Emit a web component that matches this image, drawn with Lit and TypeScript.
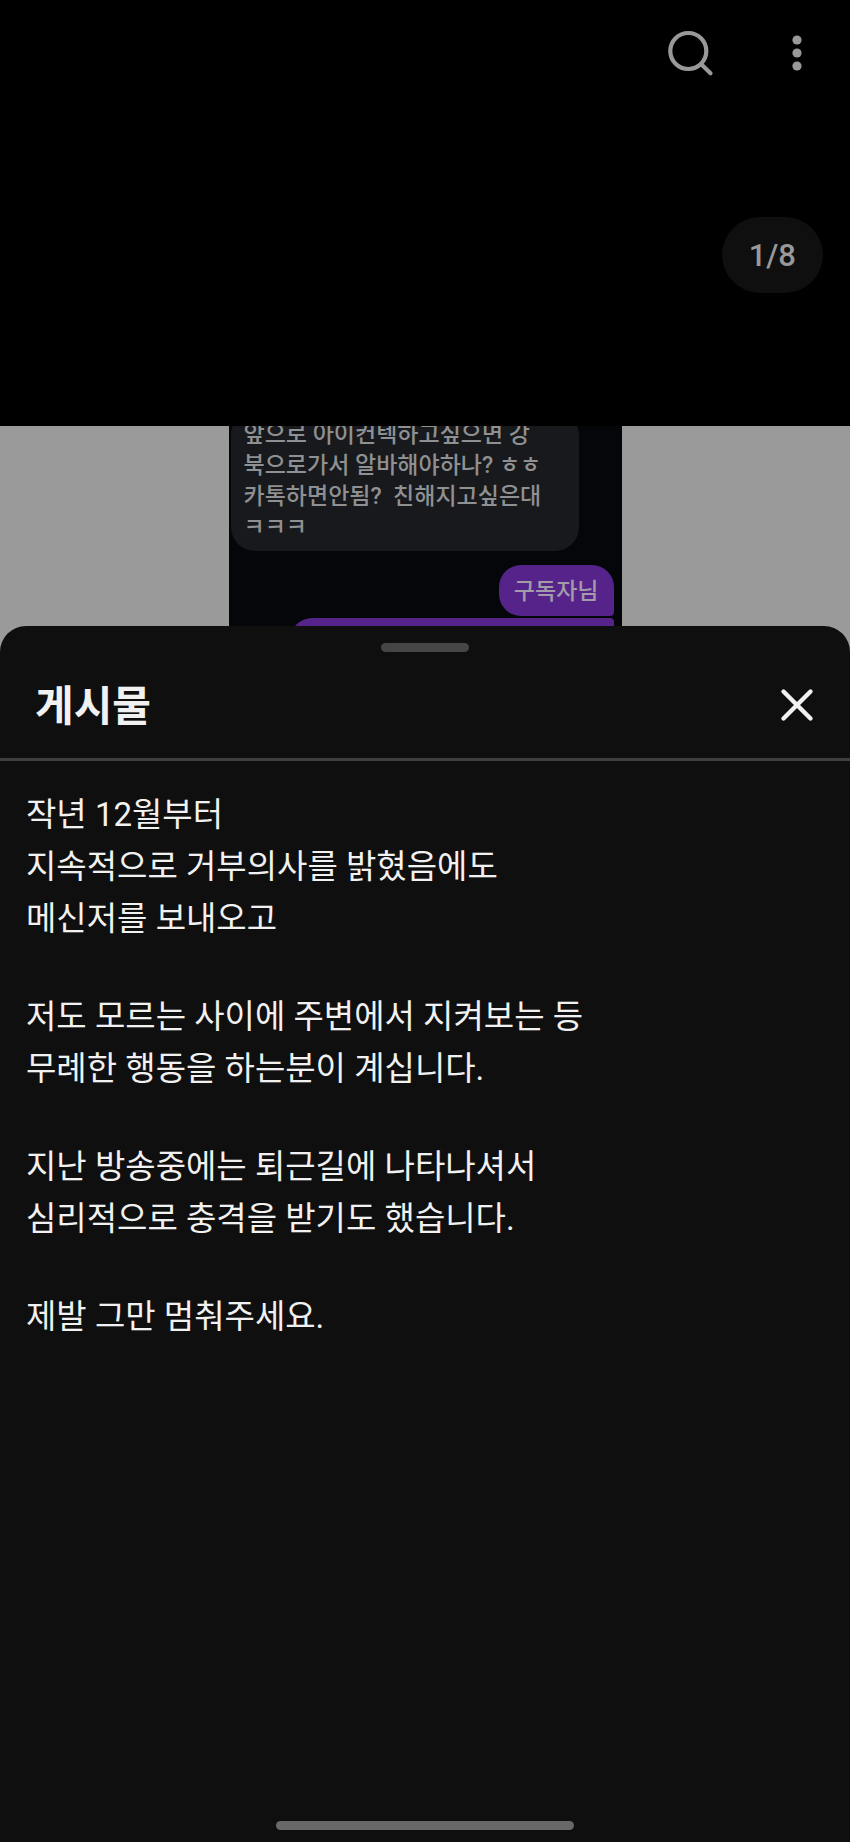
import { LitElement, html, css } from "lit";
import { customElement, state } from "lit/decorators.js";

const PARAGRAPHS = [
  "작년 12월부터\n지속적으로 거부의사를 밝혔음에도\n메신저를 보내오고",
  "저도 모르는 사이에 주변에서 지켜보는 등\n무례한 행동을 하는분이 계십니다.",
  "지난 방송중에는 퇴근길에 나타나셔서\n심리적으로 충격을 받기도 했습니다.",
  "제발 그만 멈춰주세요.",
];

const RECEIVED = "앞으로 아이컨텍하고싶으면 강\n북으로가서 알바해야하나? ㅎㅎ\n카톡하면안됨?  친해지고싶은대\nㅋㅋㅋ";

/** Cropped chat screenshot attached to the post. */
@customElement("chat-preview")
export class ChatPreview extends LitElement {
  static styles = css`
    :host {
      display: flex;
      justify-content: center;
      height: 226px;
      background: #9a9a9a;
    }
    .chat {
      box-sizing: border-box;
      display: flex;
      flex-direction: column;
      justify-content: flex-end;
      align-items: flex-end;
      width: 393px;
      padding: 0 8px 0 2px;
      overflow: hidden;
      background: #05060a;
      font-size: 23px;
      font-weight: 500;
      line-height: 31px;
    }
    .bubble {
      box-sizing: border-box;
      flex: none;
      margin: 0;
      white-space: pre;
    }
    .received {
      align-self: flex-start;
      width: 348px;
      margin-bottom: 14px;
      padding: 8px 13px;
      border-radius: 24px;
      background: #17191d;
      color: #8f9091;
    }
    .sent {
      margin-bottom: 2px;
      padding: 11px 15px 9px;
      border-radius: 22px 22px 4px 22px;
      background: #552389;
      color: #a39aaa;
    }
    .next {
      width: 324px;
      height: 34px;
      border-radius: 22px 4px 0 0;
      background: #552389;
    }
  `;

  render() {
    return html`
      <div class="chat">
        <p class="bubble received">${RECEIVED}</p>
        <p class="bubble sent">구독자님</p>
        <div class="bubble next"></div>
      </div>
    `;
  }
}

@customElement("post-sheet")
export class PostSheet extends LitElement {
  static styles = css`
    :host {
      box-sizing: border-box;
      display: flex;
      flex-direction: column;
      flex: 1;
      position: relative;
      margin-top: -26px;
      padding-top: 17px;
      border-radius: 26px 26px 0 0;
      background: #0f0f0f;
      color: #f1f1f1;
    }
    .grip {
      align-self: center;
      width: 88px;
      height: 9px;
      border-radius: 5px;
      background: #454545;
    }
    .head {
      display: flex;
      align-items: center;
      justify-content: space-between;
      height: 106px;
      padding: 0 32px 0 35px;
      border-bottom: 3px solid #3f3f3f;
    }
    .title {
      margin: 0;
      padding-top: 4px;
      font-size: 42px;
      font-weight: 700;
      line-height: 56px;
    }
    .close {
      display: flex;
      padding: 4px;
      border: 0;
      background: none;
      color: inherit;
      cursor: pointer;
    }
    .body {
      display: flex;
      flex-direction: column;
      gap: 46px;
      flex: 1;
      padding: 28px 26px 46px;
      font-size: 33px;
      line-height: 52px;
    }
    .para {
      margin: 0;
      white-space: pre-line;
    }
    .home {
      align-self: center;
      width: 35%;
      height: 9px;
      margin-bottom: 12px;
      border-radius: 5px;
      background: #686868;
    }
  `;

  render() {
    return html`
      <div class="grip"></div>
      <header class="head">
        <h1 class="title">게시물</h1>
        <button
          class="close"
          aria-label="닫기"
          @click=${() => this.dispatchEvent(new CustomEvent("sheet-close"))}
        >
          <svg width="34" height="34" viewBox="0 0 34 34" fill="none" stroke="currentColor" stroke-width="4.4" stroke-linecap="round">
            <path d="M3.5 3.5 30.5 30.5M30.5 3.5 3.5 30.5" />
          </svg>
        </button>
      </header>
      <div class="body">
        ${PARAGRAPHS.map((text) => html`<p class="para">${text}</p>`)}
      </div>
      <div class="home"></div>
    `;
  }
}

@customElement("app-root")
export class AppRoot extends LitElement {
  static styles = css`
    :host {
      display: flex;
      flex-direction: column;
      min-height: 100vh;
      background: #000;
      font-family: Roboto, "Noto Sans CJK KR", sans-serif;
    }
    .bar {
      display: flex;
      justify-content: flex-end;
      gap: 56px;
      padding: 26px 26px 0 0;
    }
    .action {
      display: flex;
      padding: 0;
      border: 0;
      background: none;
      color: #999;
      cursor: pointer;
    }
    .stage {
      display: flex;
      justify-content: flex-end;
      height: 209px;
      padding: 137px 27px 0 0;
      box-sizing: content-box;
    }
    .count {
      box-sizing: border-box;
      height: 76px;
      padding: 0 27px;
      border-radius: 38px;
      background: #0f0f0f;
      color: #999;
      font-size: 31px;
      font-weight: 500;
      line-height: 78px;
    }
  `;

  @state() private open = true;

  render() {
    return html`
      <nav class="bar">
        <button class="action" aria-label="검색">
          <svg width="54" height="54" viewBox="0 0 54 54" fill="none" stroke="currentColor" stroke-width="4.2" stroke-linecap="round">
            <circle cx="28.3" cy="25" r="18" />
            <path d="M41.5 38.5 50.5 47.3" />
          </svg>
        </button>
        <button class="action" aria-label="더보기">
          <svg width="54" height="54" viewBox="0 0 54 54" fill="currentColor">
            <circle cx="27" cy="14" r="4.6" />
            <circle cx="27" cy="27" r="4.6" />
            <circle cx="27" cy="40" r="4.6" />
          </svg>
        </button>
      </nav>
      <div class="stage"><span class="count">1/8</span></div>
      <chat-preview></chat-preview>
      ${this.open
        ? html`<post-sheet @sheet-close=${() => (this.open = false)}></post-sheet>`
        : null}
    `;
  }
}
